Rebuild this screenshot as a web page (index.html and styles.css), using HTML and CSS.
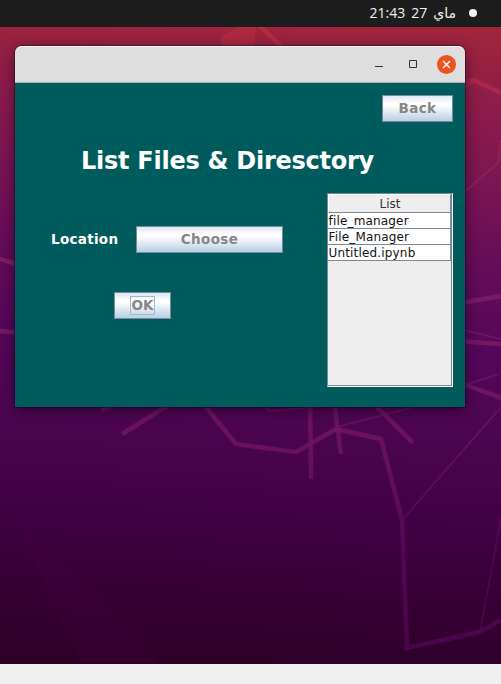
FILE: index.html
```html
<!DOCTYPE html>
<html lang="en">
<head>
<meta charset="utf-8">
<title>List Files</title>
<link rel="stylesheet" href="styles.css">
</head>
<body>
<header class="topbar">
  <span class="clock" dir="rtl"><span>ماي</span><span>27</span><span>21:43</span></span>
  <span class="dot"></span>
</header>
<main class="desktop">
  <svg class="wallpaper" viewBox="0 27 501 637" aria-hidden="true">
    <defs>
      <linearGradient id="line" gradientUnits="userSpaceOnUse" x1="0" y1="27" x2="0" y2="664">
        <stop offset="0" stop-color="#b52d42"/>
        <stop offset=".12" stop-color="#a8284f"/>
        <stop offset=".42" stop-color="#7c1c66"/>
        <stop offset=".68" stop-color="#6a1160"/>
        <stop offset=".82" stop-color="#560757"/>
        <stop offset="1" stop-color="#4c054e"/>
      </linearGradient>
    </defs>
    <path class="facet" d="M222 47V35L240 27h16l-2 20z"/>
    <path class="facet-dim" d="M0 490L18 524 80 664H160Q110 600 18 524z"/>
    <g class="thick">
      <path d="M0 259l20 6M0 331l20 2M258 24l28 27M440 88l34-8 27 13M455 304l46-8M455 341l46 3M455 381l46 17"/>
      <path d="M102 410l30-12M122 434l50-31M200 400l36 44 60 8 40-23 45 10 21 81 5 128 72-16 22-12"/>
      <path d="M310 395l1 84M333 395l8 59M368 398l45 45"/>
    </g>
    <g class="thin">
      <path d="M460 90l17-9M455 200l43-37 3-23M455 328l46 11M462 386l37-12M262 404l7 7 50-4M337 427l84-22M403 519l98-112M480 632l21-114"/>
    </g>
  </svg>
  <section class="window">
    <div class="titlebar">
      <span class="control"><svg width="10" height="10"><path d="M1 7.5h8" stroke="#333"/></svg></span>
      <span class="control"><svg width="10" height="10"><path d="M1.5 1.5h7v7h-7z" fill="none" stroke="#333"/></svg></span>
      <span class="close"><svg width="19" height="19"><path d="M6 6l7 7M13 6l-7 7" stroke="#fff" stroke-width="1.4"/></svg></span>
    </div>
    <div class="content">
      <div class="back-row"><button class="btn back">Back</button></div>
      <h1>List Files &amp; Diresctory</h1>
      <div class="body">
        <div class="form">
          <div class="location"><label>Location</label><button class="btn choose">Choose</button></div>
          <button class="btn ok"><span>OK</span></button>
        </div>
        <div class="list">
          <div class="list-head">List</div>
          <div class="item">file_manager</div>
          <div class="item">File_Manager</div>
          <div class="item">Untitled.ipynb</div>
        </div>
      </div>
    </div>
  </section>
</main>
</body>
</html>
```
FILE: styles.css
```css
* { box-sizing: border-box; }
body {
  margin: 0;
  width: 501px;
  height: 684px;
  overflow: hidden;
  background: #f0f0f0;
  font-family: "DejaVu Sans", sans-serif;
}
.topbar {
  height: 27px;
  background: #1d1d1d;
  color: #f2f2f2;
  display: flex;
  justify-content: flex-end;
  align-items: center;
  gap: 13px;
  padding-right: 24px;
  font: 14px/26px "Open Sans", "DejaVu Sans", sans-serif;
}
.clock { display: flex; gap: 6px; height: 27px; line-height: 25px; }
.dot { width: 8px; height: 8px; margin-bottom: 1px; border-radius: 50%; background: #f2f2f2; }
.desktop {
  position: relative;
  height: 637px;
  padding: 19px 36px 0 15px;
  overflow: hidden;
  background: linear-gradient(183deg, #a2263a 0%, #8d1c4a 12%, #7a1554 24%, #640c59 37%, #55065a 50%, #4b0550 63%, #420045 75%, #390037 85%, #2c0027 100%);
}
.wallpaper { position: absolute; inset: 0; width: 501px; height: 637px; }
.wallpaper path { fill: none; }
.wallpaper .facet { fill: #b52d42; opacity: .6; }
.wallpaper .facet-dim { fill: #4a0048; opacity: .2; }
.thick { stroke: url(#line); stroke-opacity: .9; stroke-width: 4.5; }
.thin { stroke: url(#line); stroke-opacity: .8; stroke-width: 1.6; }
.window {
  position: relative;
  width: 450px;
  height: 361px;
  border-radius: 7px 7px 0 0;
  box-shadow: 0 0 0 1px rgba(20, 0, 20, .35), 0 3px 14px rgba(15, 0, 20, .6);
}
.titlebar {
  height: 37px;
  border-radius: 7px 7px 0 0;
  background: #dedede;
  border-bottom: 1px solid #b5b1ae;
  box-shadow: inset 0 1px #f8f8f8;
  display: flex;
  justify-content: flex-end;
  align-items: center;
  padding-right: 9px;
}
.control { width: 10px; height: 10px; margin-right: 24px; display: flex; }
.close { width: 19px; height: 19px; border-radius: 50%; background: #e95420; display: flex; }
.control + .close { margin-left: -5px; }
.content { height: 324px; background: #005c5c; padding: 12px 12px 0 36px; color: #fff; }
.back-row { display: flex; justify-content: flex-end; }
.btn {
  height: 27px;
  padding: 0;
  border: 1px solid #7a8a99;
  border-radius: 0;
  background: linear-gradient(#dde8f3 0%, #fff 30%, #fff 36%, #b8cfe5 100%);
  color: #868686;
  font: bold 13.5px/23px "DejaVu Sans", sans-serif;
  letter-spacing: .4px;
}
.back { width: 71px; }
h1 {
  margin: 24px 0 0 30px;
  font-size: 24px;
  line-height: 30px;
  height: 30px;
  letter-spacing: -.26px;
  white-space: nowrap;
}
.body { display: flex; justify-content: space-between; margin-top: 17px; }
.form { padding-top: 33px; }
.location {
  display: flex;
  align-items: center;
  font: bold 13.5px/27px "DejaVu Sans", sans-serif;
  letter-spacing: .3px;
}
.location label { width: 85px; }
.choose { width: 147px; }
.ok { display: block; width: 57px; margin: 39px 0 0 63px; letter-spacing: 0; }
.ok span { display: inline-block; width: 25px; height: 19px; line-height: 17px; border: 1px solid #a3b8cc; }
.list {
  width: 126px;
  height: 194px;
  background: #eee;
  color: #111;
  border: 1px solid;
  border-color: #7a8a99 #fff #fff #7a8a99;
  box-shadow: inset -1px -1px #7a8a99;
  font-size: 12px;
}
.list-head {
  height: 19px;
  margin-right: 1px;
  border: 1px solid;
  border-color: #fff #7a8a99 #7a8a99 #fff;
  color: #333;
  text-align: center;
  text-indent: 1px;
  line-height: 18px;
}
.item {
  height: 16px;
  margin-right: 1px;
  border: solid #7a8a99;
  border-width: 0 1px 1px 0;
  background: #fff;
  line-height: 16px;
  letter-spacing: .17px;
  text-indent: .5px;
}
```
